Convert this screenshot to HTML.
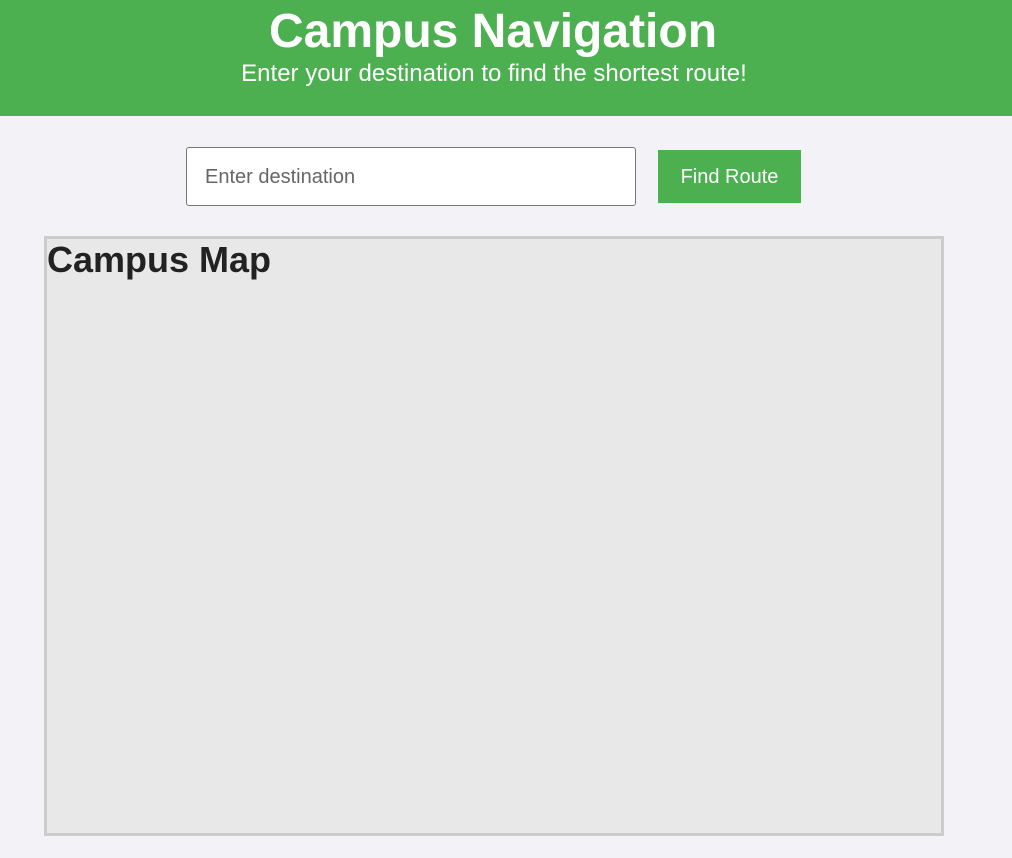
<!DOCTYPE html>
<html><head><style>
body{margin:0;background:#f3f3f7;font-family:"Liberation Sans",Arial,sans-serif;width:1012px;height:858px;overflow:hidden;position:relative}
header{position:absolute;left:0;top:0;width:1012px;height:116px;background:#4caf50;color:#fff}
h1{position:absolute;left:0;width:986px;text-align:center;top:4px;margin:0;font-size:48px;line-height:56px;font-weight:bold}
.sub{position:absolute;left:0;width:988px;text-align:center;top:60px;font-size:24px;line-height:28px}
.inp{position:absolute;left:186px;top:147px;width:448px;height:57px;border:1px solid #767676;border-radius:3px;background:#fff;box-sizing:content-box}
.inp span{position:absolute;left:18px;top:17px;font-size:20px;color:#666;line-height:24px}
.btn{position:absolute;left:658px;top:150px;width:143px;height:53px;background:#4caf50;color:#fff;font-size:20px;line-height:54px;text-align:center}
.map{position:absolute;left:44px;top:236px;width:894px;height:594px;border:3px solid #ccc;background:#e8e8e8}
.map h2{margin:0;position:absolute;left:0;top:-1px;font-size:36px;line-height:44px;color:#222}
</style></head><body>
<header><h1>Campus Navigation</h1><div class="sub">Enter your destination to find the shortest route!</div></header>
<div class="inp"><span>Enter destination</span></div>
<div class="btn">Find Route</div>
<div class="map"><h2>Campus Map</h2></div>
</body></html>
